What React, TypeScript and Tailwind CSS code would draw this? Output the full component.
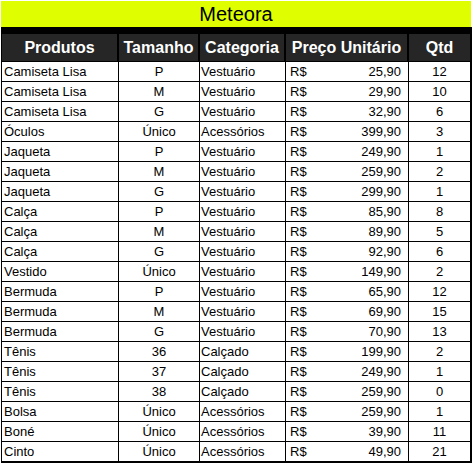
import React from "react";

const rows: [string, string, string, string, string][] = [
  ["Camiseta Lisa", "P", "Vestuário", "25,90", "12"],
  ["Camiseta Lisa", "M", "Vestuário", "29,90", "10"],
  ["Camiseta Lisa", "G", "Vestuário", "32,90", "6"],
  ["Óculos", "Único", "Acessórios", "399,90", "3"],
  ["Jaqueta", "P", "Vestuário", "249,90", "1"],
  ["Jaqueta", "M", "Vestuário", "259,90", "2"],
  ["Jaqueta", "G", "Vestuário", "299,90", "1"],
  ["Calça", "P", "Vestuário", "85,90", "8"],
  ["Calça", "M", "Vestuário", "89,90", "5"],
  ["Calça", "G", "Vestuário", "92,90", "6"],
  ["Vestido", "Único", "Vestuário", "149,90", "2"],
  ["Bermuda", "P", "Vestuário", "65,90", "12"],
  ["Bermuda", "M", "Vestuário", "69,90", "15"],
  ["Bermuda", "G", "Vestuário", "70,90", "13"],
  ["Tênis", "36", "Calçado", "199,90", "2"],
  ["Tênis", "37", "Calçado", "249,90", "1"],
  ["Tênis", "38", "Calçado", "259,90", "0"],
  ["Bolsa", "Único", "Acessórios", "259,90", "1"],
  ["Boné", "Único", "Acessórios", "39,90", "11"],
  ["Cinto", "Único", "Acessórios", "49,90", "21"],
];

export default function App() {
  return (
    <div
      className="bg-white w-[474px] h-[463px] pt-[1px] pl-[1px]"
      style={{ fontFamily: '"Liberation Sans", Arial, sans-serif' }}
    >
      <div className="w-[471px]">
        <div className="h-[26px] w-[470px] bg-[#dfff00] flex items-center justify-center text-[20px] text-black leading-none pb-[1px]">
          Meteora
        </div>
        <div className="bg-black pt-[7px] pl-[1px] pr-[2px] pb-[2px] flex flex-col gap-[1px]">
          <div className="flex h-[27px] bg-[#262626] text-white font-bold text-[16px] leading-none">
            <div className="w-[117px] flex items-center justify-center border-r-2 border-black">Produtos</div>
            <div className="w-[81px] flex items-center justify-center border-r-2 border-black">Tamanho</div>
            <div className="w-[86px] flex items-center justify-center border-r-2 border-black">Categoria</div>
            <div className="w-[123px] flex items-center justify-center border-r-2 border-black">Preço Unitário</div>
            <div className="flex-1 flex items-center justify-center">Qtd</div>
          </div>
          {rows.map((r, i) => (
            <div key={i} className="flex h-[19px] gap-[1px] text-[13px] text-black leading-none">
              <div className="w-[116px] bg-white flex items-center pl-[2px]">{r[0]}</div>
              <div className="w-[80px] bg-white flex items-center justify-center">{r[1]}</div>
              <div className="w-[85px] bg-white flex items-center pl-[1px]">{r[2]}</div>
              <div className="w-[122px] bg-white flex items-center justify-between pl-[4px] pr-[7px]">
                <span>R$</span>
                <span>{r[3]}</span>
              </div>
              <div className="flex-1 bg-white flex items-center justify-center">{r[4]}</div>
            </div>
          ))}
        </div>
      </div>
    </div>
  );
}
